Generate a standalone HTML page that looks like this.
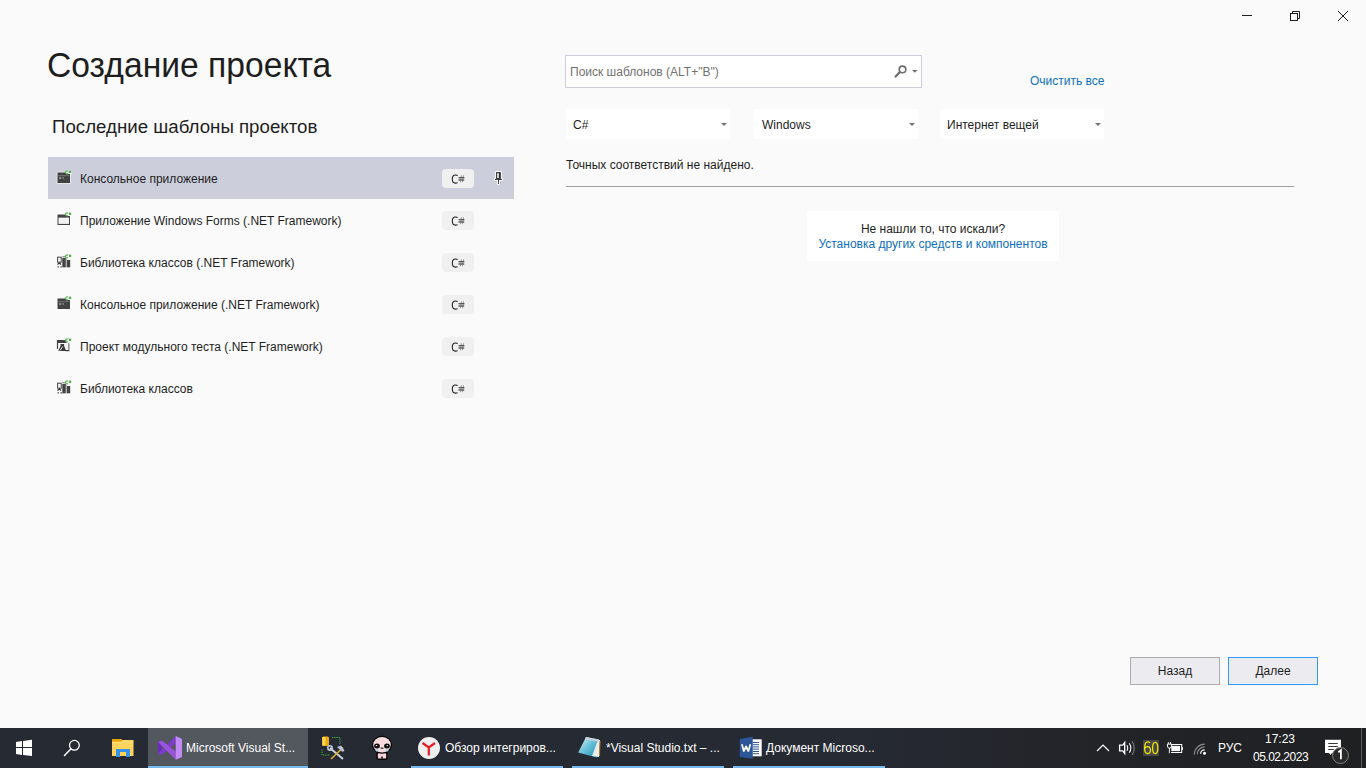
<!DOCTYPE html>
<html><head><meta charset="utf-8">
<style>
*{margin:0;padding:0;box-sizing:border-box}
html,body{width:1366px;height:768px;overflow:hidden;background:#fafafa;font-family:"Liberation Sans",sans-serif;color:#1e1e1e}
.abs{position:absolute;white-space:nowrap}
#title{left:47px;top:45px;font-size:34.5px;line-height:40px;transform-origin:0 0;transform:scaleX(0.975);color:#1e1e1e}
#sub{left:52px;top:115px;font-size:18.7px;line-height:24px;color:#1e1e1e}
.row{position:absolute;left:48px;width:466px;height:42px}
.row.sel{background:#cccedb}
.row .ic{position:absolute;left:8px;top:12px;width:16px;height:16px}
.row .t{position:absolute;left:32px;top:14px;font-size:12px;line-height:16px}
.badge{position:absolute;left:394px;top:12px;width:32px;height:19px;border-radius:4px;background:#f0f0f0;font-size:10.5px;line-height:21px;text-align:center;letter-spacing:-0.3px}
.pin{position:absolute;left:446px;top:14px;width:10px;height:14px}
#search{left:565px;top:55px;width:357px;height:33px;border:1px solid #ccceDB;background:#fff}
#search .ph{position:absolute;left:4px;top:8px;font-size:12px;line-height:16px;color:#717171}
.dd{position:absolute;top:109px;width:164px;height:30px;background:#fff}
.dd .t{position:absolute;left:7px;top:8px;font-size:12px;line-height:16px}
.dd .ar{position:absolute;right:3px;top:14px;width:0;height:0;border-left:3px solid transparent;border-right:3px solid transparent;border-top:3px solid #717171}
#clear{left:1030px;top:73px;font-size:12px;line-height:16px;color:#0e70c0}
#nores{left:566px;top:157px;font-size:12px;line-height:16px}
#hr{left:566px;top:186px;width:728px;height:1px;background:#a0a0a0}
#help{left:807px;top:211px;width:252px;height:50px;background:#fff;text-align:center}
#help .a{position:absolute;left:0;width:252px;top:10px;font-size:12px;line-height:16px}
#help .b{position:absolute;left:0;width:252px;top:25px;font-size:12px;line-height:16px;color:#0e70c0}
.btn{position:absolute;top:657px;width:90px;height:28px;background:#ececf0;border:1px solid #acacac;font-size:12px;line-height:26px;text-align:center}
.tt{position:absolute;white-space:nowrap;color:#fff;font-size:12px;line-height:16px}
#taskbar{left:0;top:728px;width:1366px;height:40px;background:linear-gradient(90deg,#262a33 0%,#262a33 62%,#222428 80%,#1f2022 100%)}
</style></head><body>
<svg class="abs" style="left:1230px;top:0" width="136" height="32" viewBox="1230 0 136 32">
<rect x="1242" y="15" width="10" height="1" fill="#1e1e1e"/>
<rect x="1290.5" y="13.5" width="7" height="7" fill="none" stroke="#1e1e1e" stroke-width="1"/>
<path d="M1292.5,13 V11.5 H1299.5 V18.5 H1298" fill="none" stroke="#1e1e1e" stroke-width="1"/>
<path d="M1338,11 L1348,21 M1348,11 L1338,21" stroke="#1e1e1e" stroke-width="1"/>
</svg>
<div class="abs" id="title">Создание проекта</div>
<div class="abs" id="sub">Последние шаблоны проектов</div>

<div class="row sel" style="top:157px"><svg class="ic" width="16" height="16" viewBox="0 0 16 16"><path d="M1.5,3.5 H10 L10.6,5 H14 V13.9 H1.5 Z" fill="none" stroke="#fff" stroke-width="1.6" opacity=".65"/><path d="M9.5,1 h6.3 v4.5 h-5 z" fill="#fff" opacity=".5"/><path d="M1.5,3.5 H10 L10.6,5 H14 V13.9 H1.5 Z" fill="#424242"/><rect x="2.2" y="6.2" width="11.2" height="0.9" fill="#777"/><path d="M3.6,8.3 h1.5 M3.6,8.3 v1.3 h1.5 M6,8.2 v0.4 M6,9.3 v0.4 M7,8 l0.8,1.8" stroke="#bbb" stroke-width="0.7" fill="none"/><path d="M12,2.3 a1.5,1.5 0 1 0 0,2.2" fill="none" stroke="#5aac52" stroke-width="1.2"/><rect x="12.8" y="1.6" width="2.4" height="2.4" fill="#5aac52"/></svg><div class="t">Консольное приложение</div><div class="badge"><svg width="32" height="19" viewBox="0 0 32 19" style="position:absolute;left:0;top:0"><path d="M15.6,6.5 Q14.7,6 13.4,6 Q10.3,6 10.3,10.05 Q10.3,14.1 13.4,14.1 Q14.7,14.1 15.6,13.6" fill="none" stroke="#1e1e1e" stroke-width="1.05"/><path d="M16.6,8.8 H22.4 M16.4,10.9 H22.2" stroke="#1e1e1e" stroke-width="1.05"/><path d="M19.4,6.4 L18.4,13.2 M21.5,6.4 L20.5,13.2" stroke="#666" stroke-width="0.65"/></svg></div><svg class="pin" width="10" height="14" viewBox="0 0 10 14"><path d="M2.1,1.1 H6.8 V7.8 H7.9 V8.9 H4.9 V13 H4 V8.9 H1 V7.8 H2.1 Z" fill="#fff" stroke="#fff" stroke-width="2" stroke-linejoin="round"/><rect x="2.1" y="1.1" width="4.7" height="6.8" fill="#2a2a2a"/><rect x="3.2" y="2.2" width="1.6" height="4.8" fill="#fff"/><rect x="1" y="7.8" width="6.9" height="1.1" fill="#2a2a2a"/><rect x="4" y="8.9" width="0.9" height="4.1" fill="#2a2a2a"/></svg></div>
<div class="row" style="top:199px"><svg class="ic" width="16" height="16" viewBox="0 0 16 16"><path d="M1.5,3.5 H10 L10.6,5 H14 V13.9 H1.5 Z" fill="none" stroke="#fff" stroke-width="1.6" opacity=".65"/><path d="M9.5,1 h6.3 v4.5 h-5 z" fill="#fff" opacity=".5"/><path d="M1.5,3.5 H10 L10.6,5 H14 V13.9 H1.5 Z" fill="#424242"/><rect x="2.5" y="6.6" width="10.5" height="6.3" fill="#f3f3f3"/><path d="M12,2.3 a1.5,1.5 0 1 0 0,2.2" fill="none" stroke="#5aac52" stroke-width="1.2"/><rect x="12.8" y="1.6" width="2.4" height="2.4" fill="#5aac52"/></svg><div class="t">Приложение Windows Forms (.NET Framework)</div><div class="badge"><svg width="32" height="19" viewBox="0 0 32 19" style="position:absolute;left:0;top:0"><path d="M15.6,6.5 Q14.7,6 13.4,6 Q10.3,6 10.3,10.05 Q10.3,14.1 13.4,14.1 Q14.7,14.1 15.6,13.6" fill="none" stroke="#1e1e1e" stroke-width="1.05"/><path d="M16.6,8.8 H22.4 M16.4,10.9 H22.2" stroke="#1e1e1e" stroke-width="1.05"/><path d="M19.4,6.4 L18.4,13.2 M21.5,6.4 L20.5,13.2" stroke="#666" stroke-width="0.65"/></svg></div></div>
<div class="row" style="top:241px"><svg class="ic" width="16" height="16" viewBox="0 0 16 16"><rect x="1.6" y="4.2" width="3.6" height="5" fill="none" stroke="#424242" stroke-width="1"/><rect x="6.3" y="5" width="3.6" height="9.3" fill="#424242"/><rect x="6.3" y="3.3" width="3" height="1" fill="#777"/><rect x="10.8" y="7" width="3.4" height="7.3" fill="#424242"/><rect x="9.6" y="5.6" width="1" height="8.6" fill="#999"/><path d="M1.5,11.5 l2,-1.6 l1.4,1.8 M1.6,13.8 h1.2 M4.5,13.8 h1.3" stroke="#333" stroke-width="1.2" fill="none"/><path d="M12,2.3 a1.5,1.5 0 1 0 0,2.2" fill="none" stroke="#5aac52" stroke-width="1.2"/><rect x="12.8" y="1.6" width="2.4" height="2.4" fill="#5aac52"/></svg><div class="t">Библиотека классов (.NET Framework)</div><div class="badge"><svg width="32" height="19" viewBox="0 0 32 19" style="position:absolute;left:0;top:0"><path d="M15.6,6.5 Q14.7,6 13.4,6 Q10.3,6 10.3,10.05 Q10.3,14.1 13.4,14.1 Q14.7,14.1 15.6,13.6" fill="none" stroke="#1e1e1e" stroke-width="1.05"/><path d="M16.6,8.8 H22.4 M16.4,10.9 H22.2" stroke="#1e1e1e" stroke-width="1.05"/><path d="M19.4,6.4 L18.4,13.2 M21.5,6.4 L20.5,13.2" stroke="#666" stroke-width="0.65"/></svg></div></div>
<div class="row" style="top:283px"><svg class="ic" width="16" height="16" viewBox="0 0 16 16"><path d="M1.5,3.5 H10 L10.6,5 H14 V13.9 H1.5 Z" fill="none" stroke="#fff" stroke-width="1.6" opacity=".65"/><path d="M9.5,1 h6.3 v4.5 h-5 z" fill="#fff" opacity=".5"/><path d="M1.5,3.5 H10 L10.6,5 H14 V13.9 H1.5 Z" fill="#424242"/><rect x="2.2" y="6.2" width="11.2" height="0.9" fill="#777"/><path d="M3.6,8.3 h1.5 M3.6,8.3 v1.3 h1.5 M6,8.2 v0.4 M6,9.3 v0.4 M7,8 l0.8,1.8" stroke="#bbb" stroke-width="0.7" fill="none"/><path d="M12,2.3 a1.5,1.5 0 1 0 0,2.2" fill="none" stroke="#5aac52" stroke-width="1.2"/><rect x="12.8" y="1.6" width="2.4" height="2.4" fill="#5aac52"/></svg><div class="t">Консольное приложение (.NET Framework)</div><div class="badge"><svg width="32" height="19" viewBox="0 0 32 19" style="position:absolute;left:0;top:0"><path d="M15.6,6.5 Q14.7,6 13.4,6 Q10.3,6 10.3,10.05 Q10.3,14.1 13.4,14.1 Q14.7,14.1 15.6,13.6" fill="none" stroke="#1e1e1e" stroke-width="1.05"/><path d="M16.6,8.8 H22.4 M16.4,10.9 H22.2" stroke="#1e1e1e" stroke-width="1.05"/><path d="M19.4,6.4 L18.4,13.2 M21.5,6.4 L20.5,13.2" stroke="#666" stroke-width="0.65"/></svg></div></div>
<div class="row" style="top:325px"><svg class="ic" width="16" height="16" viewBox="0 0 16 16"><path d="M1.5,12 V3.6 H10" stroke="#424242" stroke-width="1.2" fill="none"/><rect x="1.5" y="3.6" width="9" height="2.4" fill="#424242"/><path d="M12.8,6.3 V13.6 H9.5" stroke="#424242" stroke-width="1.1" fill="none"/><rect x="5" y="7" width="7.3" height="6" fill="#f2f2f2"/><path d="M4.5,6.9 h3.6 v2.2 l2.2,4.8 h-8 l2.2,-4.8 z" fill="#3a3a3a"/><path d="M6.6,9.5 l-2.5,4" stroke="#fff" stroke-width="0.9"/><path d="M12,2.3 a1.5,1.5 0 1 0 0,2.2" fill="none" stroke="#5aac52" stroke-width="1.2"/><rect x="12.8" y="1.6" width="2.4" height="2.4" fill="#5aac52"/></svg><div class="t">Проект модульного теста (.NET Framework)</div><div class="badge"><svg width="32" height="19" viewBox="0 0 32 19" style="position:absolute;left:0;top:0"><path d="M15.6,6.5 Q14.7,6 13.4,6 Q10.3,6 10.3,10.05 Q10.3,14.1 13.4,14.1 Q14.7,14.1 15.6,13.6" fill="none" stroke="#1e1e1e" stroke-width="1.05"/><path d="M16.6,8.8 H22.4 M16.4,10.9 H22.2" stroke="#1e1e1e" stroke-width="1.05"/><path d="M19.4,6.4 L18.4,13.2 M21.5,6.4 L20.5,13.2" stroke="#666" stroke-width="0.65"/></svg></div></div>
<div class="row" style="top:367px"><svg class="ic" width="16" height="16" viewBox="0 0 16 16"><rect x="1.6" y="4.2" width="3.6" height="5" fill="none" stroke="#424242" stroke-width="1"/><rect x="6.3" y="5" width="3.6" height="9.3" fill="#424242"/><rect x="6.3" y="3.3" width="3" height="1" fill="#777"/><rect x="10.8" y="7" width="3.4" height="7.3" fill="#424242"/><rect x="9.6" y="5.6" width="1" height="8.6" fill="#999"/><path d="M1.5,11.5 l2,-1.6 l1.4,1.8 M1.6,13.8 h1.2 M4.5,13.8 h1.3" stroke="#333" stroke-width="1.2" fill="none"/><path d="M12,2.3 a1.5,1.5 0 1 0 0,2.2" fill="none" stroke="#5aac52" stroke-width="1.2"/><rect x="12.8" y="1.6" width="2.4" height="2.4" fill="#5aac52"/></svg><div class="t">Библиотека классов</div><div class="badge"><svg width="32" height="19" viewBox="0 0 32 19" style="position:absolute;left:0;top:0"><path d="M15.6,6.5 Q14.7,6 13.4,6 Q10.3,6 10.3,10.05 Q10.3,14.1 13.4,14.1 Q14.7,14.1 15.6,13.6" fill="none" stroke="#1e1e1e" stroke-width="1.05"/><path d="M16.6,8.8 H22.4 M16.4,10.9 H22.2" stroke="#1e1e1e" stroke-width="1.05"/><path d="M19.4,6.4 L18.4,13.2 M21.5,6.4 L20.5,13.2" stroke="#666" stroke-width="0.65"/></svg></div></div>

<div class="abs" id="search"><div class="ph">Поиск шаблонов (ALT+"В")</div><svg style="position:absolute;left:0;top:0" width="355" height="31" viewBox="566 56 355 31"><circle cx="902.5" cy="69.4" r="3.3" fill="none" stroke="#6d6d6d" stroke-width="1.6"/><line x1="899.8" y1="72.2" x2="895.6" y2="76.6" stroke="#6d6d6d" stroke-width="2.2" stroke-linecap="round"/><polygon points="912,70 917.6,70 914.8,72.8" fill="#717171"/></svg></div>
<div class="abs" id="clear">Очистить все</div>
<div class="dd" style="left:566px"><div class="t">C#</div><div class="ar"></div></div>
<div class="dd" style="left:754px"><div class="t" style="left:8px">Windows</div><div class="ar"></div></div>
<div class="dd" style="left:940px"><div class="t">Интернет вещей</div><div class="ar"></div></div>
<div class="abs" id="nores">Точных соответствий не найдено.</div>
<div class="abs" id="hr"></div>
<div class="abs" id="help"><div class="a">Не нашли то, что искали?</div><div class="b">Установка других средств и компонентов</div></div>

<div class="btn" style="left:1130px">Назад</div>
<div class="btn" style="left:1228px;border-color:#3399ff">Далее</div>

<div class="abs" id="taskbar">
<div style="position:absolute;left:148px;top:0;width:160px;height:40px;background:#53575e"></div>
<div style="position:absolute;left:148px;top:38px;width:160px;height:2px;background:#76b9ed"></div>
<div style="position:absolute;left:411px;top:38px;width:152px;height:2px;background:#76b9ed"></div>
<div style="position:absolute;left:572px;top:38px;width:152px;height:2px;background:#76b9ed"></div>
<div style="position:absolute;left:733px;top:38px;width:152px;height:2px;background:#76b9ed"></div>
<div style="position:absolute;left:1361px;top:0;width:1px;height:40px;background:#5c5c5c"></div>
<svg width="1366" height="40" viewBox="0 728 1366 40" style="position:absolute;left:0;top:0">
<g fill="#fff">
<polygon points="16,742 22,741 22,747 16,747"/>
<polygon points="23,741 32,739.8 32,747 23,747"/>
<polygon points="16,748 22,748 22,755 16,754"/>
<polygon points="23,748 32,748 32,756 23,755"/>
</g>
<circle cx="74.4" cy="745.3" r="4.9" fill="none" stroke="#fff" stroke-width="1.3"/>
<line x1="70.8" y1="749" x2="64.5" y2="755.5" stroke="#fff" stroke-width="1.5" stroke-linecap="round"/>
<!-- folder -->
<rect x="112" y="740" width="21.5" height="16" fill="#ffd35e"/>
<path d="M112,739 H121.5 L122.5,740.5 L121.5,741.8 H112 Z" fill="#e8a300"/>
<rect x="112" y="741.8" width="21.5" height="0.8" fill="#ffe58e"/>
<path d="M116,749 h14 v8 h-4 v-5 h-6 v5 h-4 z" fill="#3592e6"/>
<!-- VS -->
<polygon points="158,742 161.5,740.5 161.5,753 158,754" fill="#6a2bbf"/>
<polygon points="175.7,736 175.7,743.2 161.5,755 158,753.5" fill="#7d3cc9"/>
<polygon points="158,742 162,740.5 175.7,751.6 175.7,759.7" fill="#9b53db"/>
<polygon points="175.7,736 182,739 182,757 175.7,759.7" fill="#c38bf7"/>
<!-- tools -->
<rect x="322" y="736.5" width="7" height="9.5" rx="1.5" fill="#e9ab10"/>
<rect x="322.5" y="737" width="3" height="8.5" fill="#ffd85a"/>
<g stroke="#3cb43c" stroke-width="1" stroke-dasharray="1.3 0.9" fill="none">
<path d="M332,737.5 H340 V745"/><path d="M322,749.5 V755 H330"/>
</g>
<line x1="330" y1="748" x2="343" y2="759" stroke="#c9d2e0" stroke-width="2"/>
<line x1="343" y1="747.5" x2="331" y2="759" stroke="#e0b030" stroke-width="1.6"/>
<path d="M337,747 l4,-1.5 l3.5,5 l-2,1.5 z" fill="#b9c4d6"/>
<circle cx="330" cy="748" r="2.2" fill="none" stroke="#c9d2e0" stroke-width="1.5"/>
<!-- isaac -->
<rect x="376.5" y="751.5" width="11" height="8.5" rx="2" fill="#000"/>
<rect x="377.8" y="753" width="8.4" height="5.6" rx="1" fill="#f6d6da"/>
<rect x="381.3" y="756.5" width="1.4" height="2.2" fill="#000"/>
<ellipse cx="382" cy="744.8" rx="10" ry="9" fill="#000"/>
<ellipse cx="382" cy="744.8" rx="8.8" ry="7.8" fill="#f9dadd"/>
<ellipse cx="377" cy="746" rx="2.9" ry="2.5" fill="#0d0d0d"/>
<ellipse cx="387" cy="746" rx="2.9" ry="2.5" fill="#0d0d0d"/>
<rect x="375.8" y="745" width="1.4" height="1.1" fill="#fff"/><rect x="386.6" y="745" width="1.2" height="1.1" fill="#fff"/>
<path d="M375,749.6 h3.4 v1.8 h-2.4 z M385.6,749.6 h3.4 l-1,1.8 h-2.4 z" fill="#9ad8ea"/>
<rect x="380.6" y="747.4" width="2.8" height="1.6" fill="#555"/>
<!-- yandex -->
<circle cx="429" cy="748" r="11" fill="#efefef"/>
<path d="M422.5,743 L428.8,747.5 L435,743 M428.8,747.5 V755.5" fill="none" stroke="#e31e24" stroke-width="2.2"/>
<!-- notepad -->
<defs><linearGradient id="np" x1="0" y1="0" x2="1" y2="1"><stop offset="0" stop-color="#e8f4f8"/><stop offset=".45" stop-color="#6cc3da"/><stop offset="1" stop-color="#1c88a8"/></linearGradient></defs>
<polygon points="586,737 599,739.5 597.3,757.8 578.2,752.4" fill="url(#np)"/>
<polygon points="598,740 600,740 599,757 592,756" fill="#e6eef0"/><polygon points="586,737 599,739.5 598.6,741.5 585,739.2" fill="#c9d3d8"/>
<line x1="600" y1="741" x2="599.5" y2="756" stroke="#b87f1e" stroke-width="1"/>
<!-- word -->
<rect x="752" y="739.3" width="9.7" height="17" fill="#fff"/>
<g fill="#2b579a"><rect x="753" y="742" width="6" height="1"/><rect x="753" y="744.2" width="6" height="1"/><rect x="753" y="746.4" width="6" height="1"/><rect x="753" y="748.6" width="6" height="1"/><rect x="753" y="751" width="6" height="1"/><rect x="753" y="753.2" width="6" height="1"/></g>
<polygon points="739.8,739 752.8,736.8 752.8,758.7 739.8,757" fill="#2b579a"/>
<path d="M741.9,744.2 L743.9,751.4 L746.1,746.2 L748.3,751.4 L750.4,744.2" fill="none" stroke="#fff" stroke-width="1.7" stroke-linejoin="bevel"/>
<!-- tray -->
<polyline points="1097,751 1103,745 1109,751" fill="none" stroke="#fff" stroke-width="1.2"/>
<path d="M1119.6,745.2 h3.2 l1.9,-2.6 v10.8 l-1.9,-2.6 h-3.2 z" fill="none" stroke="#fff" stroke-width="1.3"/>
<path d="M1127,745.2 q1.6,2.8 0,5.6" fill="none" stroke="#fff" stroke-width="1.1"/>
<path d="M1129.3,743.2 q3,4.8 0,9.6" fill="none" stroke="#fff" stroke-width="1.1"/>
<path d="M1132.2,741.2 q4,6.9 0,13.8" fill="none" stroke="#8a8a8a" stroke-width="1"/>
<rect x="1143" y="740" width="16" height="16" fill="#474747"/><path d="M1150,742.8 q-1,-0.9 -2.4,-0.9 q-2.9,0 -3,6.2 q0,5.5 3,5.5 q2.8,0 2.8,-3.6 q0,-3.4 -2.8,-3.4 q-2,0 -3,2" fill="none" stroke="#f2e600" stroke-width="1.25"/><ellipse cx="1155.2" cy="747.9" rx="2.6" ry="5.6" fill="none" stroke="#f2e600" stroke-width="1.25"/>
<path d="M1168.3,742 v2 M1170.5,742 v2 M1169.4,748 v5.2" stroke="#fff" stroke-width="0.9"/>
<path d="M1167.4,744.1 h4.2 v2 q0,2 -2.1,2 q-2.1,0 -2.1,-2 z" fill="none" stroke="#fff" stroke-width="1"/>
<path d="M1172,744.5 H1181.7 V752.5 H1171" fill="none" stroke="#fff" stroke-width="1.05"/>
<rect x="1171.3" y="745.9" width="8.7" height="5.2" fill="#fff"/>
<rect x="1182" y="747.2" width="1" height="2.7" fill="#fff"/>
<circle cx="1204.5" cy="753.2" r="1.5" fill="#fff"/>
<path d="M1200.6,753.8 a4,4 0 0 1 4,-4" fill="none" stroke="#fff" stroke-width="1.2"/>
<path d="M1197.4,754.2 a7.3,7.3 0 0 1 7.3,-7.3" fill="none" stroke="#888" stroke-width="1.2"/>
<path d="M1194.4,754.4 a10.3,10.3 0 0 1 10.3,-10.3" fill="none" stroke="#888" stroke-width="1.2"/>
<path d="M1325,739.8 h16 v13.2 h-9 l-1.5,2 l-1.5,-2 h-4 z" fill="#fff"/>
<g fill="#222"><rect x="1328.2" y="743" width="9.6" height="0.9"/><rect x="1328.2" y="746" width="9.6" height="0.9"/><rect x="1328.2" y="749" width="5.6" height="0.9"/></g>
<circle cx="1340.5" cy="755.5" r="8" fill="#2a2a2a" stroke="#8a8a8a" stroke-width="0.9"/><path d="M1338.3,752.2 l2.6,-2 v9" fill="none" stroke="#fff" stroke-width="1.8"/>
</svg>
<div class="tt" style="left:186px;top:12px">Microsoft Visual St...</div>
<div class="tt" style="left:445px;top:12px">Обзор интегриров...</div>
<div class="tt" style="left:606px;top:12px">*Visual Studio.txt – ...</div>
<div class="tt" style="left:766px;top:12px">Документ Microso...</div>

<div class="tt" style="left:1218px;top:12px">РУС</div>
<div class="tt" style="left:1253px;top:3px;width:54px;text-align:center">17:23</div>
<div class="tt" style="left:1253px;top:21px;width:54px;text-align:center;letter-spacing:-0.5px">05.02.2023</div>

</div>
</body></html>
